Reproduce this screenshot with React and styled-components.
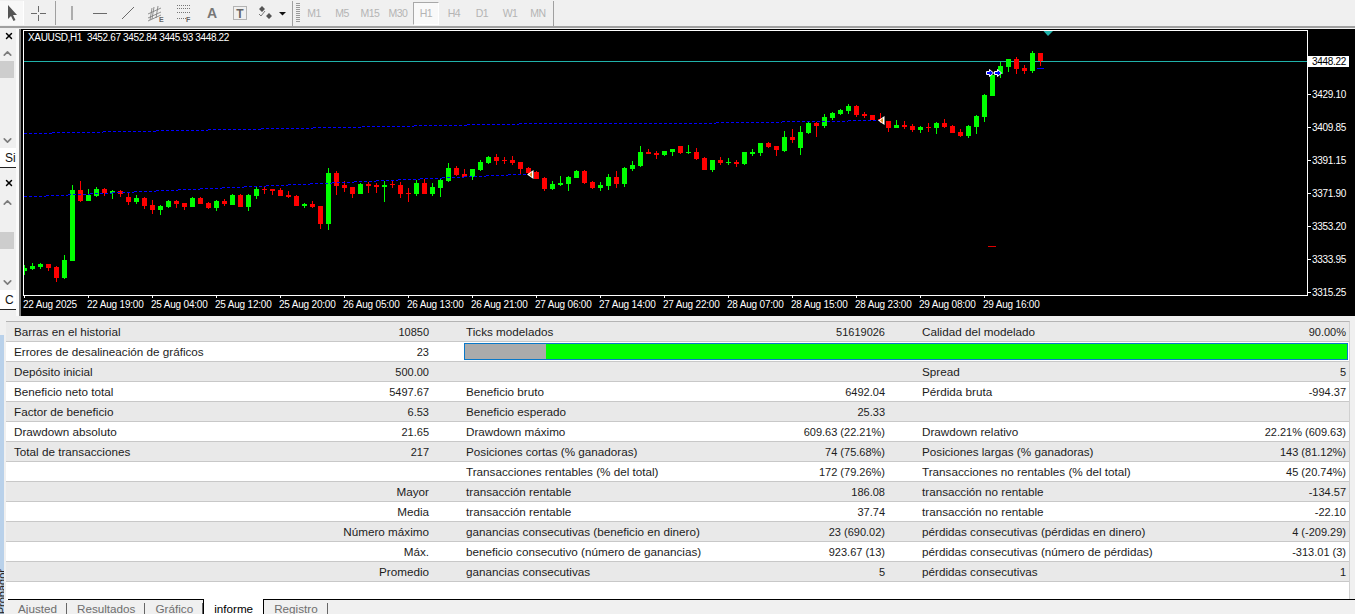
import styled, { createGlobalStyle } from 'styled-components';
import { ChevronUp, ChevronDown, X } from 'lucide-react';

const GlobalStyle = createGlobalStyle`
  html, body {
    margin: 0;
    padding: 0;
    background: #f0f0f0;
    overflow: hidden;
  }
`;

const Page = styled.div`
  width: 1355px;
  height: 614px;
  overflow: hidden;
  display: flex;
  flex-direction: column;
  background: #f0f0f0;
  font-family: "Liberation Sans", Arial, sans-serif;
`;

const Toolbar = styled.div`
  height: 26px;
  flex: none;
  display: flex;
  align-items: center;
  background: #f0f0f0;
  border-bottom: 2px solid #a0a0a0;
`;

const Tool = styled.div`
  width: ${(p) => p.$w || 28}px;
  height: 24px;
  flex: none;
  display: flex;
  align-items: center;
  justify-content: center;
  box-sizing: border-box;
  background: ${(p) => (p.$active ? '#f8f8f8' : 'transparent')};
  border-right: ${(p) => (p.$active ? '1px solid #fff' : 'none')};
  color: #6a6a6a;
`;

const ToolSep = styled.div`
  width: 6px;
  height: 24px;
  flex: none;
  display: flex;
  justify-content: center;
  &::before {
    content: '';
    width: 1px;
    background: #a0a0a0;
  }
`;

const BarSep = styled.div`
  width: 1px;
  height: 25px;
  flex: none;
  margin: ${(p) => p.$margin};
  background: #a0a0a0;
`;

const Grip = styled.div`
  width: 4px;
  height: 20px;
  flex: none;
  margin: 0 0 0 3px;
  background: repeating-linear-gradient(to bottom, #9a9a9a 0 1px, #f0f0f0 1px 2px);
`;

const Period = styled.div`
  width: ${(p) => (p.$active ? 26 : 28)}px;
  height: 23px;
  margin: ${(p) => (p.$active ? '0 1px' : '0')};
  flex: none;
  box-sizing: border-box;
  display: flex;
  align-items: center;
  justify-content: center;
  font-size: 10.5px;
  letter-spacing: -0.5px;
  color: #b4b4b4;
  background: ${(p) => (p.$active ? '#f9f9f9' : 'transparent')};
  border: ${(p) => (p.$active ? '1px solid' : 'none')};
  border-color: #a8a8a8 #fff #fff #a8a8a8;
`;

const MiddleRow = styled.div`
  height: 287px;
  flex: none;
  margin-top: 1px;
  display: flex;
`;

const LeftPanel = styled.div`
  width: 21px;
  flex: none;
  box-sizing: border-box;
  border-right: 2px solid #808080;
  display: flex;
  flex-direction: column;
  background: #f0f0f0;
`;

const NavSection = styled.div`
  height: ${(p) => p.$h}px;
  flex: none;
  display: flex;
  flex-direction: column;
  box-sizing: border-box;
  padding: ${(p) => p.$pad};
  border-right: 3px solid #fafafa;
`;

const NavHeader = styled.div`
  height: ${(p) => p.$h}px;
  flex: none;
  box-sizing: border-box;
  display: flex;
  align-items: center;
  justify-content: flex-end;
  padding: 0 2px ${(p) => p.$bottom || 0}px 0;
  color: #000;
`;

const ScrollBtn = styled.div`
  width: 14px;
  height: 16px;
  flex: none;
  display: flex;
  align-items: center;
  justify-content: center;
  color: #7c7c7c;
`;

const Thumb = styled.div`
  width: 14px;
  height: 17px;
  flex: none;
  margin-top: ${(p) => p.$top || 0}px;
  background: #cdcdcd;
`;

const Spacer = styled.div`
  flex: 1;
`;

const NavTab = styled.div`
  width: 16px;
  height: 20px;
  flex: none;
  overflow: hidden;
  box-sizing: border-box;
  background: #fff;
  border-bottom: 1px solid #222;
  padding: 1px 0 0 5px;
  font-size: 12px;
  line-height: 18px;
  color: #111;
`;

const ChartPanel = styled.div`
  position: relative;
  flex: 1;
  background: #000;
  padding: 1px 0 0 2px;
  display: grid;
  grid-template-columns: 1285px 1fr;
  grid-template-rows: 266px 1fr;
  color: #fff;
  font-size: 10px;
`;

const Frame = styled.div`
  box-sizing: border-box;
  border: 1px solid #fff;
  overflow: hidden;
  svg {
    display: block;
  }
`;

const ChartTitle = styled.div`
  position: absolute;
  left: 7px;
  top: 3px;
  white-space: pre;
  line-height: 12px;
  letter-spacing: -0.35px;
`;

const PriceAxis = styled.div`
  display: flex;
  flex-direction: column;
  gap: 22px;
  padding-top: 26px;
`;

const PriceTick = styled.div`
  position: relative;
  width: 41px;
  height: 11px;
  line-height: 11px;
  padding-left: 4px;
  box-sizing: border-box;
  white-space: nowrap;
  letter-spacing: -0.3px;
  background: ${(p) => (p.$current ? '#fff' : 'transparent')};
  color: ${(p) => (p.$current ? '#000' : '#fff')};
  &::before {
    content: '';
    position: absolute;
    left: 0;
    top: 5px;
    width: 3px;
    height: 1px;
    background: ${(p) => (p.$current ? 'transparent' : '#fff')};
  }
`;

const DateAxis = styled.div`
  grid-column: 1 / 3;
  display: flex;
  padding-left: 1px;
`;

const DateTick = styled.div`
  position: relative;
  width: 64px;
  flex: none;
  padding-top: 3px;
  line-height: 12px;
  white-space: nowrap;
  text-indent: -1px;
  letter-spacing: -0.2px;
  &::before {
    content: '';
    position: absolute;
    left: 0;
    top: 0;
    width: 1px;
    height: 2px;
    background: #fff;
  }
`;

const BottomRow = styled.div`
  flex: 1;
  min-height: 0;
  display: flex;
`;

const SideStrip = styled.div`
  width: 4px;
  flex: none;
  margin-top: 19px;
  margin-right: 2px;
  background: #b9d1ea;
  display: flex;
  align-items: flex-end;
  overflow: hidden;
`;

const SideLabel = styled.div`
  writing-mode: vertical-rl;
  transform: rotate(180deg);
  font-size: 11px;
  line-height: 4px;
  color: #222;
  white-space: nowrap;
`;

const ReportColumn = styled.div`
  flex: 1;
  min-width: 0;
  display: flex;
  flex-direction: column;
  padding-top: 5px;
`;

const Report = styled.div`
  flex: 1;
  margin-right: 5px;
  border-top: 1px solid #b4b4b4;
  border-right: 1px solid #d0d0d0;
  background: #fff;
`;

const Row = styled.div`
  height: 20px;
  box-sizing: border-box;
  display: grid;
  grid-template-columns: 431px 435px 1fr;
  column-gap: 21px;
  align-items: center;
  background: ${(p) => (p.$shaded ? '#e9e9e9' : '#fff')};
  border-bottom: 1px solid #c8c8c8;
  font-size: 11.7px;
  color: #1c1c1c;
`;

const Cell = styled.div`
  display: flex;
  align-items: baseline;
  justify-content: ${(p) => (p.$end ? 'flex-end' : 'space-between')};
  padding: 0 8px;
  white-space: nowrap;
  &:last-child {
    padding-right: 3px;
  }
`;

const Value = styled.span`
  font-size: 11px;
`;

const QualityCell = styled.div`
  grid-column: 2 / 4;
  margin-left: 6px;
  margin-right: 1px;
  height: 17px;
  box-sizing: border-box;
  border: 1px solid #0a78c8;
  display: flex;
`;

const QualityLost = styled.div`
  width: 81px;
  background: #ababab;
`;

const QualityFill = styled.div`
  flex: 1;
  background: #00ff00;
`;

const TabStrip = styled.div`
  height: 15px;
  flex: none;
  display: flex;
  margin-left: 2px;
  margin-top: -1px;
`;

const Tab = styled.div`
  position: relative;
  flex: none;
  box-sizing: border-box;
  padding: 1px 10px 0;
  font-size: 11.7px;
  line-height: 15px;
  color: #6e6e6e;
  background: #f0f0f0;
  border-top: 1px solid #000;
  &::after {
    content: '';
    position: absolute;
    right: 0;
    top: 3px;
    width: 1px;
    height: 11px;
    background: #666;
  }
`;

const ActiveTab = styled.div`
  flex: none;
  box-sizing: border-box;
  padding: 2px 10px 0;
  font-size: 11.7px;
  line-height: 15px;
  color: #000;
  background: #fff;
  border-left: 1px solid #000;
  border-right: 1px solid #000;
`;

const TabFiller = styled.div`
  flex: 1;
  background: #f0f0f0;
  border-top: 1px solid #000;
`;

// body/wick values are in 3x zoom units, [up, bodyTop, bodyBottom, wickTop, wickBottom]
const blocks = [
  {
    x: 24,
    y: 150,
    rows: [
      [1, 354, 364, 345, 375], [1, 348, 358, 339, 360], [1, 342, 352, 338, 357], [0, 342, 354, 342, 363],
      [0, 351, 384, 348, 396], [1, 330, 384, 315, 387], [1, 120, 333, 105, 333], [0, 120, 153, 93, 156],
      [1, 135, 153, 117, 153], [1, 117, 138, 111, 141], [0, 117, 130, 114, 138], [1, 123, 128, 120, 147],
      [0, 123, 132, 120, 141], [0, 141, 156, 129, 165], [1, 144, 156, 135, 162], [0, 144, 168, 141, 177],
      [0, 165, 180, 150, 192], [1, 168, 180, 165, 195], [1, 153, 171, 150, 174], [0, 153, 162, 150, 174],
      [0, 159, 171, 159, 180], [1, 144, 171, 141, 171], [0, 144, 162, 141, 162], [0, 159, 174, 156, 177],
      [1, 153, 174, 150, 183], [0, 153, 162, 147, 168], [1, 135, 165, 132, 165], [0, 135, 171, 132, 171],
      [1, 135, 171, 132, 183], [1, 117, 138, 111, 147], [0, 117, 120, 108, 132], [0, 117, 123, 117, 135],
      [0, 120, 138, 114, 138], [0, 135, 141, 123, 144], [0, 138, 168, 135, 168], [1, 162, 168, 159, 174],
      [0, 162, 171, 153, 174], [0, 168, 222, 168, 237], [1, 69, 222, 54, 240], [0, 69, 108, 63, 135],
      [0, 105, 114, 93, 126], [0, 111, 132, 111, 144], [1, 102, 132, 99, 132],
    ],
  },
  {
    x: 368,
    y: 130,
    rows: [
      [0, 162, 168, 156, 189], [0, 165, 171, 159, 189], [1, 165, 171, 153, 216], [0, 162, 165, 150, 174],
      [0, 165, 192, 156, 204], [0, 189, 192, 174, 216], [1, 159, 192, 150, 198], [0, 159, 192, 147, 192],
      [1, 171, 192, 159, 198], [1, 150, 174, 147, 201], [1, 114, 153, 99, 156], [0, 114, 135, 108, 138],
      [0, 132, 141, 117, 141], [1, 117, 141, 117, 150], [1, 96, 120, 90, 123], [1, 81, 99, 78, 102],
      [0, 81, 93, 72, 105], [0, 90, 93, 81, 102], [0, 90, 99, 78, 105], [0, 96, 117, 96, 132],
      [0, 114, 129, 111, 132], [0, 126, 147, 123, 147], [0, 144, 177, 141, 183], [1, 162, 177, 153, 180],
      [1, 159, 165, 138, 168], [1, 141, 162, 138, 183], [1, 123, 144, 120, 144], [0, 123, 159, 120, 162],
      [0, 156, 174, 153, 177], [1, 165, 174, 156, 183], [1, 141, 168, 132, 180], [0, 141, 162, 123, 174],
      [1, 114, 162, 111, 171], [1, 105, 117, 93, 123], [1, 66, 108, 48, 111], [0, 66, 72, 57, 72],
      [0, 69, 75, 63, 87], [1, 63, 75, 63, 78], [1, 57, 66, 57, 78], [0, 48, 69, 48, 72], [1, 66, 69, 45, 72],
    ],
  },
  {
    x: 696,
    y: 90,
    rows: [
      [0, 186, 207, 174, 210], [0, 204, 240, 201, 240], [1, 210, 240, 210, 246], [0, 210, 219, 201, 225],
      [1, 216, 219, 204, 225], [0, 216, 222, 210, 231], [1, 186, 222, 186, 225], [1, 186, 192, 177, 198],
      [1, 159, 189, 159, 198], [0, 159, 171, 156, 174], [0, 168, 180, 168, 198], [1, 141, 183, 123, 186],
      [0, 141, 150, 117, 159], [1, 126, 174, 108, 195], [1, 99, 129, 93, 132], [0, 99, 108, 96, 141],
      [1, 81, 108, 72, 114], [1, 69, 84, 66, 90], [1, 60, 72, 57, 75], [1, 48, 63, 42, 72],
      [0, 48, 75, 45, 81], [0, 72, 78, 66, 84], [0, 75, 90, 75, 90], [0, 87, 93, 69, 99],
      [0, 93, 114, 93, 126], [1, 105, 114, 90, 114], [0, 105, 111, 93, 117], [0, 108, 120, 102, 126],
      [1, 111, 120, 108, 129], [0, 111, 114, 99, 126], [1, 99, 114, 96, 132], [0, 99, 111, 87, 114],
      [0, 108, 129, 105, 129], [0, 126, 138, 117, 141], [1, 108, 138, 105, 144], [1, 78, 111, 75, 132],
    ],
  },
  {
    x: 984,
    y: 20,
    rows: [
      [1, 225, 291, 222, 306], [1, 165, 228, 165, 228], [1, 138, 162, 126, 174], [1, 117, 141, 117, 156],
      [0, 117, 147, 111, 162], [0, 144, 153, 135, 162], [1, 99, 153, 93, 159], [0, 99, 123, 99, 138],
    ],
  },
];

const candles = blocks.flatMap((b) =>
  b.rows.map(([up, top, bottom, wTop, wBottom], i) => ({
    x: b.x + i * 8,
    up,
    top: Math.round(b.y + top / 3),
    bottom: Math.round(b.y + bottom / 3),
    wTop: Math.round(b.y + wTop / 3),
    wBottom: Math.round(b.y + wBottom / 3),
  }))
);

const upperLine = [
  [24, 52, 133.5], [52, 103, 132.5], [103, 156, 131.5], [156, 208, 130.5], [208, 261, 129.5],
  [261, 313, 128.5], [313, 362, 127.5], [362, 414, 126.5], [414, 467, 125.5], [467, 519, 124.5],
  [519, 716, 123.5], [716, 782, 122.5], [782, 848, 121.5], [848, 880, 120.5],
];

const lowerLine = Array.from({ length: 23 }, (_, i) => [24 + i * 22, Math.min(24 + (i + 1) * 22, 528), 196.5 - i]);

const toPath = (segments) => segments.map(([a, b, y]) => `M${a} ${y}H${b}`).join('');

const ChartDrawing = () => (
  <svg width="1283" height="264" viewBox="24 31 1283 264">
    <g shapeRendering="crispEdges">
      <rect x="24" y="61" width="1283" height="1" fill="#20b2aa" />
      {candles.map((c) => (
        <g key={c.x} fill={c.up ? '#00ff00' : '#ff0000'}>
          <rect x={c.x} y={c.wTop} width="1" height={Math.max(c.wBottom - c.wTop, 1)} />
          <rect x={c.x - 2} y={c.top} width="5" height={Math.max(c.bottom - c.top, 1)} />
        </g>
      ))}
      <path d={toPath(upperLine)} stroke="#0000ff" strokeDasharray="3 2" fill="none" />
      <path d={toPath(lowerLine)} stroke="#0000ff" strokeDasharray="3 2" fill="none" />
      <rect x="1037" y="68" width="7" height="1" fill="#0000ff" />
      <rect x="988" y="246" width="8" height="1" fill="#e00000" />
    </g>
    <polygon points="1043.5,31 1053,31 1048,36" fill="#20b2aa" />
    {[527, 878].map((x, i) => {
      const y = i ? 116 : 170;
      return (
        <g key={x}>
          <polygon points={`${x + 6.5},${y} ${x + 6.5},${y + 9} ${x},${y + 4.5}`} fill="#fff" />
          <polygon points={`${x + 5},${y + 2} ${x + 5},${y + 7} ${x + 2},${y + 4.5}`} fill="#d88a28" />
        </g>
      );
    })}
    {[986, 994].map((x) => (
      <path
        key={x}
        d={`M${x + 0.5} 71.5h3v-2l4 3.5-4 3.5v-2h-3z`}
        fill="#0000ff"
        stroke="#fff"
        strokeWidth="1"
      />
    ))}
  </svg>
);

const CursorIcon = () => (
  <svg width="14" height="18" viewBox="0 0 14 18">
    <path d="M3 1v14l3-3 2.5 5 2-1-2.5-5h4z" fill="#555" />
  </svg>
);

const CrossIcon = () => (
  <svg width="17" height="17" viewBox="0 0 17 17" stroke="#6a6a6a" fill="none">
    <path d="M8.5 1v6M8.5 10v6M1 8.5h6M10 8.5h6" />
  </svg>
);

const LineIcon = ({ d }) => (
  <svg width="16" height="16" viewBox="0 0 16 16" stroke="#6a6a6a" fill="none">
    <path d={d} />
  </svg>
);

const ChannelIcon = () => (
  <svg width="18" height="18" viewBox="0 0 18 18" fill="none" stroke="#777">
    <path d="M1 10l13-6M1 14l13-6M1 17l13-6M5 15l2-12M9 14l2-12M3 16l2-12" strokeWidth="0.8" />
    <text x="12" y="18" fontSize="7" fontWeight="bold" fill="#666" stroke="none" fontFamily="Liberation Sans">E</text>
  </svg>
);

const FiboIcon = () => (
  <svg width="16" height="18" viewBox="0 0 16 18" fill="none" stroke="#777" strokeDasharray="1 1">
    <path d="M1 1.5h14M1 4.5h14M1 8.5h14M1 14.5h9" />
    <text x="10" y="18" fontSize="7" fontWeight="bold" fill="#666" stroke="none" strokeDasharray="none" fontFamily="Liberation Sans">F</text>
  </svg>
);

const LabelIcon = () => (
  <svg width="14" height="14" viewBox="0 0 14 14">
    <path d="M.5.5h13v13H.5z" fill="none" stroke="#777" strokeDasharray="1 1" />
    <text x="7" y="11.5" textAnchor="middle" fontSize="12" fontWeight="bold" fill="#666" fontFamily="Liberation Sans">T</text>
  </svg>
);

const ArrowsIcon = () => (
  <svg width="30" height="16" viewBox="0 0 30 16">
    <path d="M5 1l3 3-3 3-3-3zM12 8l3 3-3 3-3-3z" fill="#555" />
    <path d="M2 9l2 2 4-5" stroke="#777" fill="none" />
    <path d="M22 7h7l-3.5 3.5z" fill="#111" />
  </svg>
);

const ToolText = styled.span`
  font-size: 14px;
  font-weight: bold;
  color: #777;
`;

const periods = ['M1', 'M5', 'M15', 'M30', 'H1', 'H4', 'D1', 'W1', 'MN'];

const prices = ['3448.22', '3429.10', '3409.85', '3391.15', '3371.90', '3353.20', '3333.95', '3315.25'];

const dates = [
  '22 Aug 2025', '22 Aug 19:00', '25 Aug 04:00', '25 Aug 12:00', '25 Aug 20:00', '26 Aug 05:00',
  '26 Aug 13:00', '26 Aug 21:00', '27 Aug 06:00', '27 Aug 14:00', '27 Aug 22:00', '28 Aug 07:00',
  '28 Aug 15:00', '28 Aug 23:00', '29 Aug 08:00', '29 Aug 16:00',
];

const rows = [
  [['Barras en el historial', '10850'], ['Ticks modelados', '51619026'], ['Calidad del modelado', '90.00%']],
  [['Errores de desalineación de gráficos', '23']],
  [['Depósito inicial', '500.00'], ['', ''], ['Spread', '5']],
  [['Beneficio neto total', '5497.67'], ['Beneficio bruto', '6492.04'], ['Pérdida bruta', '-994.37']],
  [['Factor de beneficio', '6.53'], ['Beneficio esperado', '25.33'], ['', '']],
  [['Drawdown absoluto', '21.65'], ['Drawdown máximo', '609.63 (22.21%)'], ['Drawdown relativo', '22.21% (609.63)']],
  [['Total de transacciones', '217'], ['Posiciones cortas (% ganadoras)', '74 (75.68%)'], ['Posiciones largas (% ganadoras)', '143 (81.12%)']],
  [['', ''], ['Transacciones rentables (% del total)', '172 (79.26%)'], ['Transacciones no rentables (% del total)', '45 (20.74%)']],
  [['Mayor'], ['transacción rentable', '186.08'], ['transacción no rentable', '-134.57']],
  [['Media'], ['transacción rentable', '37.74'], ['transacción no rentable', '-22.10']],
  [['Número máximo'], ['ganancias consecutivas (beneficio en dinero)', '23 (690.02)'], ['pérdidas consecutivas (pérdidas en dinero)', '4 (-209.29)']],
  [['Máx.'], ['beneficio consecutivo (número de ganancias)', '923.67 (13)'], ['pérdidas consecutivas (número de pérdidas)', '-313.01 (3)']],
  [['Promedio'], ['ganancias consecutivas', '5'], ['pérdidas consecutivas', '1']],
];

const App = () => {
  return (
    <Page>
      <GlobalStyle />
      <Toolbar>
        <Tool $w={24} $active><CursorIcon /></Tool>
        <Tool><CrossIcon /></Tool>
        <ToolSep />
        <Tool><LineIcon d="M8 1v14" /></Tool>
        <Tool><LineIcon d="M1 8.5h14" /></Tool>
        <Tool><LineIcon d="M2 14L14 2" /></Tool>
        <Tool><ChannelIcon /></Tool>
        <Tool><FiboIcon /></Tool>
        <Tool><ToolText>A</ToolText></Tool>
        <Tool><LabelIcon /></Tool>
        <Tool $w={36}><ArrowsIcon /></Tool>
        <BarSep $margin="0 0 0 2px" />
        <Grip />
        {periods.map((p) => (
          <Period key={p} $active={p === 'H1'}>{p}</Period>
        ))}
        <BarSep $margin="0 0 0 1px" />
      </Toolbar>
      <MiddleRow>
        <LeftPanel>
          <NavSection $h={140} $pad="0 0 1px">
            <NavHeader $h={16} $bottom={2}><X size={10} strokeWidth={3.5} /></NavHeader>
            <ScrollBtn><ChevronUp size={13} strokeWidth={3} /></ScrollBtn>
            <Thumb />
            <Spacer />
            <ScrollBtn><ChevronDown size={13} strokeWidth={3} /></ScrollBtn>
            <NavTab>Si</NavTab>
          </NavSection>
          <NavSection $h={147} $pad="3px 0 6px">
            <NavHeader $h={22}><X size={10} strokeWidth={3.5} /></NavHeader>
            <ScrollBtn><ChevronUp size={13} strokeWidth={3} /></ScrollBtn>
            <Thumb $top={22} />
            <Spacer />
            <ScrollBtn><ChevronDown size={13} strokeWidth={3} /></ScrollBtn>
            <NavTab>C</NavTab>
          </NavSection>
        </LeftPanel>
        <ChartPanel>
          <Frame><ChartDrawing /></Frame>
          <PriceAxis>
            {prices.map((p, i) => (
              <PriceTick key={p} $current={i === 0}>{p}</PriceTick>
            ))}
          </PriceAxis>
          <DateAxis>
            {dates.map((d) => (
              <DateTick key={d}>{d}</DateTick>
            ))}
          </DateAxis>
          <ChartTitle>XAUUSD,H1  3452.67 3452.84 3445.93 3448.22</ChartTitle>
        </ChartPanel>
      </MiddleRow>
      <BottomRow>
        <SideStrip><SideLabel>Probador</SideLabel></SideStrip>
        <ReportColumn>
          <Report>
            {rows.map((cells, i) => (
              <Row key={i} $shaded={i % 2 === 0}>
                {cells.map(([label, value], j) => (
                  <Cell key={j} $end={value === undefined}>
                    <span>{label}</span>
                    {value !== undefined && <Value>{value}</Value>}
                  </Cell>
                ))}
                {i === 1 && (
                  <QualityCell>
                    <QualityLost />
                    <QualityFill />
                  </QualityCell>
                )}
              </Row>
            ))}
          </Report>
          <TabStrip>
            <Tab>Ajusted</Tab>
            <Tab>Resultados</Tab>
            <Tab>Gráfico</Tab>
            <ActiveTab>informe</ActiveTab>
            <Tab>Registro</Tab>
            <TabFiller />
          </TabStrip>
        </ReportColumn>
      </BottomRow>
    </Page>
  );
};

export default App;
